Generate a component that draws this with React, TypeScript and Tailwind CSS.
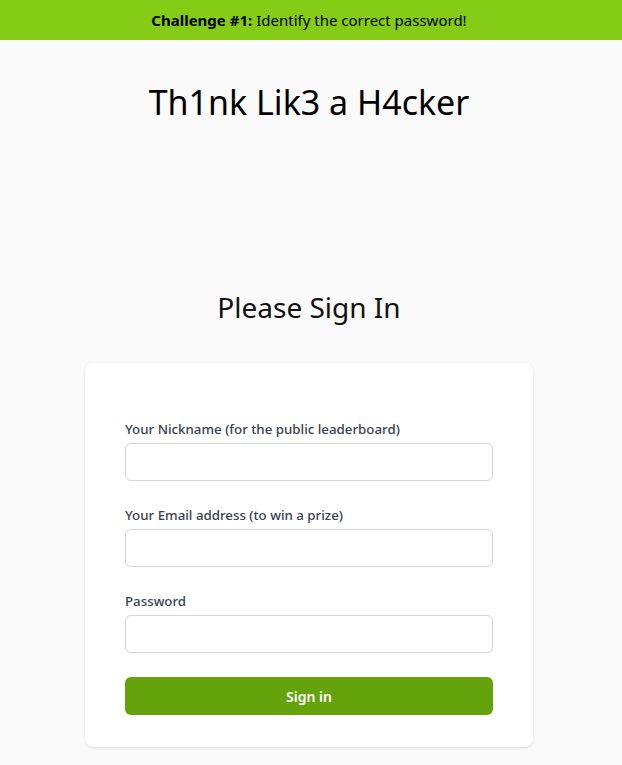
export default function App() {
  return (
    <div className="min-h-screen bg-[#fafafa] pr-1 font-['Noto_Sans',sans-serif] text-black">
      {/* Challenge banner */}
      <div className="-mr-1 flex h-10 items-center justify-center bg-[#84cc16] pr-1 text-[15px]">
        <span className="font-bold">Challenge #1:</span>
        <span className="ml-1">Identify the correct password!</span>
      </div>

      <h1 className="mt-[42px] text-center text-[34px] leading-10">Th1nk Lik3 a H4cker</h1>

      <h2 className="mt-[167px] text-center text-[28px] leading-9 text-[#111]">Please Sign In</h2>

      <div className="mx-auto mt-[38px] w-[448px] rounded-lg bg-white px-10 pt-[56px] pb-8 shadow-[0_1px_3px_rgba(0,0,0,0.12)]">
        <form className="space-y-6" onSubmit={(e) => e.preventDefault()}>
          <div>
            <label className="block text-[13.3px] leading-[21px] font-medium text-[#374151]">
              Your Nickname (for the public leaderboard)
            </label>
            <input
              type="text"
              className="mt-[3px] block h-[38px] w-full rounded-md border border-[#d1d5db] bg-white px-3"
            />
          </div>
          <div>
            <label className="block text-[13.3px] leading-[21px] font-medium text-[#374151]">
              Your Email address (to win a prize)
            </label>
            <input
              type="email"
              className="mt-[3px] block h-[38px] w-full rounded-md border border-[#d1d5db] bg-white px-3"
            />
          </div>
          <div>
            <label className="block text-[13.3px] leading-[21px] font-medium text-[#374151]">Password</label>
            <input
              type="password"
              className="mt-[3px] block h-[38px] w-full rounded-md border border-[#d1d5db] bg-white px-3"
            />
          </div>
          <button
            type="submit"
            className="flex h-[38px] w-full items-center justify-center rounded-md bg-[#65a30d] text-[14px] font-semibold text-white"
          >
            Sign in
          </button>
        </form>
      </div>
    </div>
  );
}
